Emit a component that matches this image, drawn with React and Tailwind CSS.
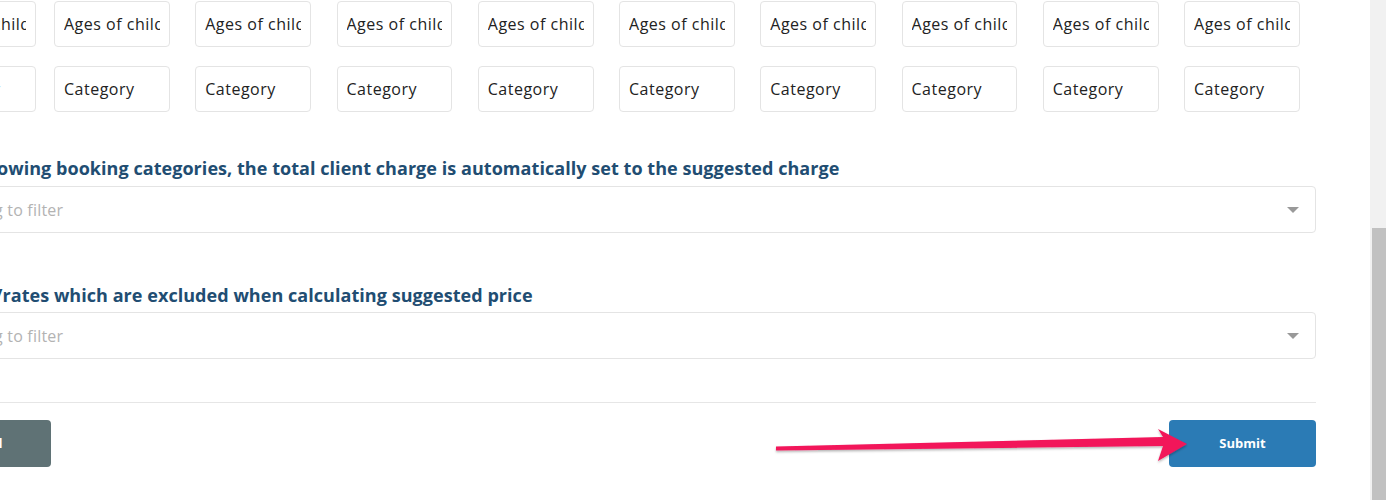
import React from 'react';

const font = { fontFamily: '"Open Sans", "DejaVu Sans", sans-serif' };

// Small boxes in the rows of repeated fields
const FieldBox = ({ value }) => (
  <input
    readOnly
    value={value}
    className="h-[46px] w-full rounded-[4px] border border-[#e4e4e4] bg-white px-[9px] text-[16px] tracking-[0.5px] text-[#222] outline-none"
  />
);

const FieldRow = ({ value }) => (
  <div className="flex h-[46px] items-start">
    <div className="ml-[-80px] w-[116px] shrink-0">
      <FieldBox value={value} />
    </div>
    <div className="ml-[18px] grid w-[1246px] shrink-0 grid-cols-9 gap-x-[25.3px]">
      {Array.from({ length: 9 }).map((_, i) => (
        <FieldBox key={i} value={value} />
      ))}
    </div>
  </div>
);

const FilterSelect = () => (
  <div className="ml-[-40px] flex h-[47px] items-center justify-between rounded-[4px] border border-[#e4e4e4] bg-white pr-[16px]">
    <span className="ml-[33px] text-[16px] tracking-[0.2px] text-[#b3b3b3]">g to filter</span>
    <span className="h-0 w-0 border-x-[6px] border-t-[6px] border-x-transparent border-t-[#999]" />
  </div>
);

export default function App() {
  return (
    <div className="relative flex h-[500px] w-[1386px] overflow-hidden bg-white" style={font}>
      {/* Main form */}
      <div className="flex w-[1370px] flex-col pr-[54px] pt-[1px]">
        <FieldRow value="Ages of children" />
        <div className="mt-[19px]">
          <FieldRow value="Category" />
        </div>

        <h3 className="ml-[-3px] mt-[45px] whitespace-nowrap text-[18px] font-bold leading-[22px] tracking-[0.05px] text-[#214d72]">
          owing booking categories, the total client charge is automatically set to the suggested charge
        </h3>
        <div className="mt-[7px]">
          <FilterSelect />
        </div>

        <h3 className="ml-[-5px] mt-[51px] whitespace-nowrap text-[18px] font-bold leading-[22px] tracking-[0.05px] text-[#214d72]">
          /rates which are excluded when calculating suggested price
        </h3>
        <div className="mt-[6px]">
          <FilterSelect />
        </div>

        <div className="ml-[-40px] mt-[43px] border-t border-[#e6e6e6]" />

        <div className="mt-[17px] flex items-center justify-between">
          <button className="ml-[-89px] flex h-[47px] w-[140px] items-center justify-center rounded-[4px] bg-[#5f7275] text-[13px] font-bold text-white">
            Cancel
          </button>
          <button className="flex h-[47px] w-[147px] items-center justify-center rounded-[4px] bg-[#2b7bb5] text-[13px] font-bold text-white">
            Submit
          </button>
        </div>
      </div>

      {/* Scrollbar */}
      <div className="flex w-[16px] flex-col bg-[#f1f1f1]">
        <div className="h-[228px]" />
        <div className="ml-[2px] flex-1 bg-[#c1c1c1]" />
      </div>

      {/* Annotation arrow */}
      <svg
        className="pointer-events-none absolute left-0 top-0"
        width="1386"
        height="500"
        viewBox="0 0 1386 500"
      >
        <defs>
          <filter id="shadow" x="-5%" y="-50%" width="110%" height="200%">
            <feDropShadow dx="0" dy="1.5" stdDeviation="1.2" floodColor="#000" floodOpacity="0.3" />
          </filter>
        </defs>
        <polygon
          points="776,446.5 1163,437 1158,429 1187,444 1158,461 1163,446 776,450.5"
          fill="#f2145a"
          filter="url(#shadow)"
        />
      </svg>
    </div>
  );
}
